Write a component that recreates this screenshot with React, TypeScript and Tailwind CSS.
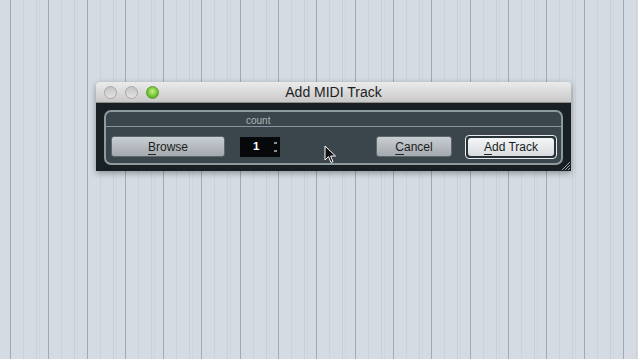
import React from "react";

const cols = Array.from({ length: 17 });

function Btn({ label, rest, w, primary }: { label: string; rest: string; w: string; primary?: boolean }) {
  return (
    <div
      className={
        primary
          ? `${w} h-[24px] rounded-[4px] border border-[#e8ecef] p-[2px] bg-[#2a3337]`
          : `${w} h-[21px]`
      }
    >
      <div
        className={
          primary
            ? "h-full w-full rounded-[3px] bg-gradient-to-b from-[#f4f5f6] to-[#d9dcdf] flex items-center justify-center text-[12px] text-[#1a1d20]"
            : "h-full w-full rounded-[3px] border border-[#5d686d] bg-gradient-to-b from-[#c9ced2] to-[#a3a9ae] flex items-center justify-center text-[12px] text-[#1a1d20]"
        }
        style={{ fontFamily: '"Liberation Sans", Arial, sans-serif' }}
      >
        <span className="underline decoration-[#222] underline-offset-[3px]">{label}</span>
        <span>{rest}</span>
      </div>
    </div>
  );
}

export default function App() {
  return (
    <div className="relative w-[638px] h-[359px] overflow-hidden bg-[#d4dbe2]">
      {/* striped background */}
      <div className="absolute inset-0 flex pl-[10px]">
        {cols.map((_, i) => (
          <div key={i} className="relative w-[38.3px] h-full shrink-0 border-l border-[#a3abb2]">
            <div className="absolute top-0 bottom-0 left-[12px] w-px bg-[#cbd2d9]" />
            <div className="absolute top-0 bottom-0 left-[25px] w-px bg-[#c8d0d7]" />
            <div className="absolute top-0 bottom-0 left-[28px] w-px bg-[#ced5dc]" />
          </div>
        ))}
      </div>

      <div className="relative pt-[82px] pl-[96px]">
        {/* window */}
        <div className="w-[475px] h-[89px] flex flex-col rounded-t-[4px] overflow-hidden shadow-[0_2px_6px_rgba(0,0,0,0.35)]">
          {/* title bar */}
          <div className="h-[21px] shrink-0 relative flex items-center bg-gradient-to-b from-[#ebebeb] to-[#c9c9c9] border-b border-[#8e8e8e]">
            <div className="flex items-center gap-[8px] pl-[8px]">
              <div className="w-[13px] h-[13px] rounded-full bg-gradient-to-b from-[#c4c4c4] to-[#e2e2e2] border border-[#a8a8a8]" />
              <div className="w-[13px] h-[13px] rounded-full bg-gradient-to-b from-[#c4c4c4] to-[#e2e2e2] border border-[#a8a8a8]" />
              <div className="w-[13px] h-[13px] rounded-full bg-[radial-gradient(circle_at_50%_40%,#c8f08a,#6cc02c_60%,#4a9a1c)] border border-[#5e9a30]" />
            </div>
            <div
              className="absolute inset-0 flex items-center justify-center pt-[1px] text-[14px] text-[#1e1e1e]"
              style={{ fontFamily: '"Liberation Sans", Arial, sans-serif' }}
            >
              Add MIDI Track
            </div>
          </div>
          {/* body */}
          <div className="relative flex-1 bg-[#182024] pt-[7px] pl-[8px] pr-[8px] pb-[6px]">
            <div className="h-full rounded-[7px] border-2 border-[#8d9ba1] bg-[#3a464b] flex flex-col">
              <div className="h-[15px] shrink-0 border-b border-[#8794a0] flex">
                <div
                  className="ml-[140px] pt-[1px] text-[10px] text-[#aab5bb] leading-[15px]"
                  style={{ fontFamily: '"Liberation Sans", Arial, sans-serif' }}
                >
                  count
                </div>
              </div>
              <div className="flex-1 flex items-center pt-[3px] pl-[5px] pr-[4px]">
                <Btn label="B" rest="rowse" w="w-[114px]" />
                <div className="ml-[15px] w-[40px] h-[20px] bg-[#060809] flex items-center">
                  <span
                    className="ml-[13px] text-[11.5px] font-bold text-white"
                    style={{ fontFamily: '"Liberation Sans", Arial, sans-serif' }}
                  >
                    1
                  </span>
                  <div className="ml-auto mr-[3px] flex flex-col gap-[6px]">
                    <div className="w-[3px] h-[2px] bg-[#8a8f93]" />
                    <div className="w-[3px] h-[2px] bg-[#8a8f93]" />
                  </div>
                </div>
                <div className="ml-auto flex items-center gap-[13px]">
                  <Btn label="C" rest="ancel" w="w-[76px]" />
                  <Btn label="A" rest="dd Track" w="w-[92px]" primary />
                </div>
              </div>
            </div>
            {/* resize grip */}
            <svg className="absolute right-[1px] bottom-[1px]" width="10" height="10" viewBox="0 0 10 10">
              <line x1="2" y1="10" x2="10" y2="2" stroke="#9aa4a9" strokeWidth="1" />
              <line x1="5" y1="10" x2="10" y2="5" stroke="#9aa4a9" strokeWidth="1" />
              <line x1="8" y1="10" x2="10" y2="8" stroke="#9aa4a9" strokeWidth="1" />
            </svg>
          </div>
        </div>
      </div>

      {/* mouse cursor */}
      <svg className="absolute left-[324px] top-[145px]" width="13" height="19" viewBox="0 0 13 19">
        <path d="M1 1 L1 15 L4.5 11.5 L7 17.5 L9 16.6 L6.6 11 L11.5 11 Z" fill="#111" stroke="#fff" strokeWidth="1" strokeLinejoin="round" />
      </svg>
    </div>
  );
}
